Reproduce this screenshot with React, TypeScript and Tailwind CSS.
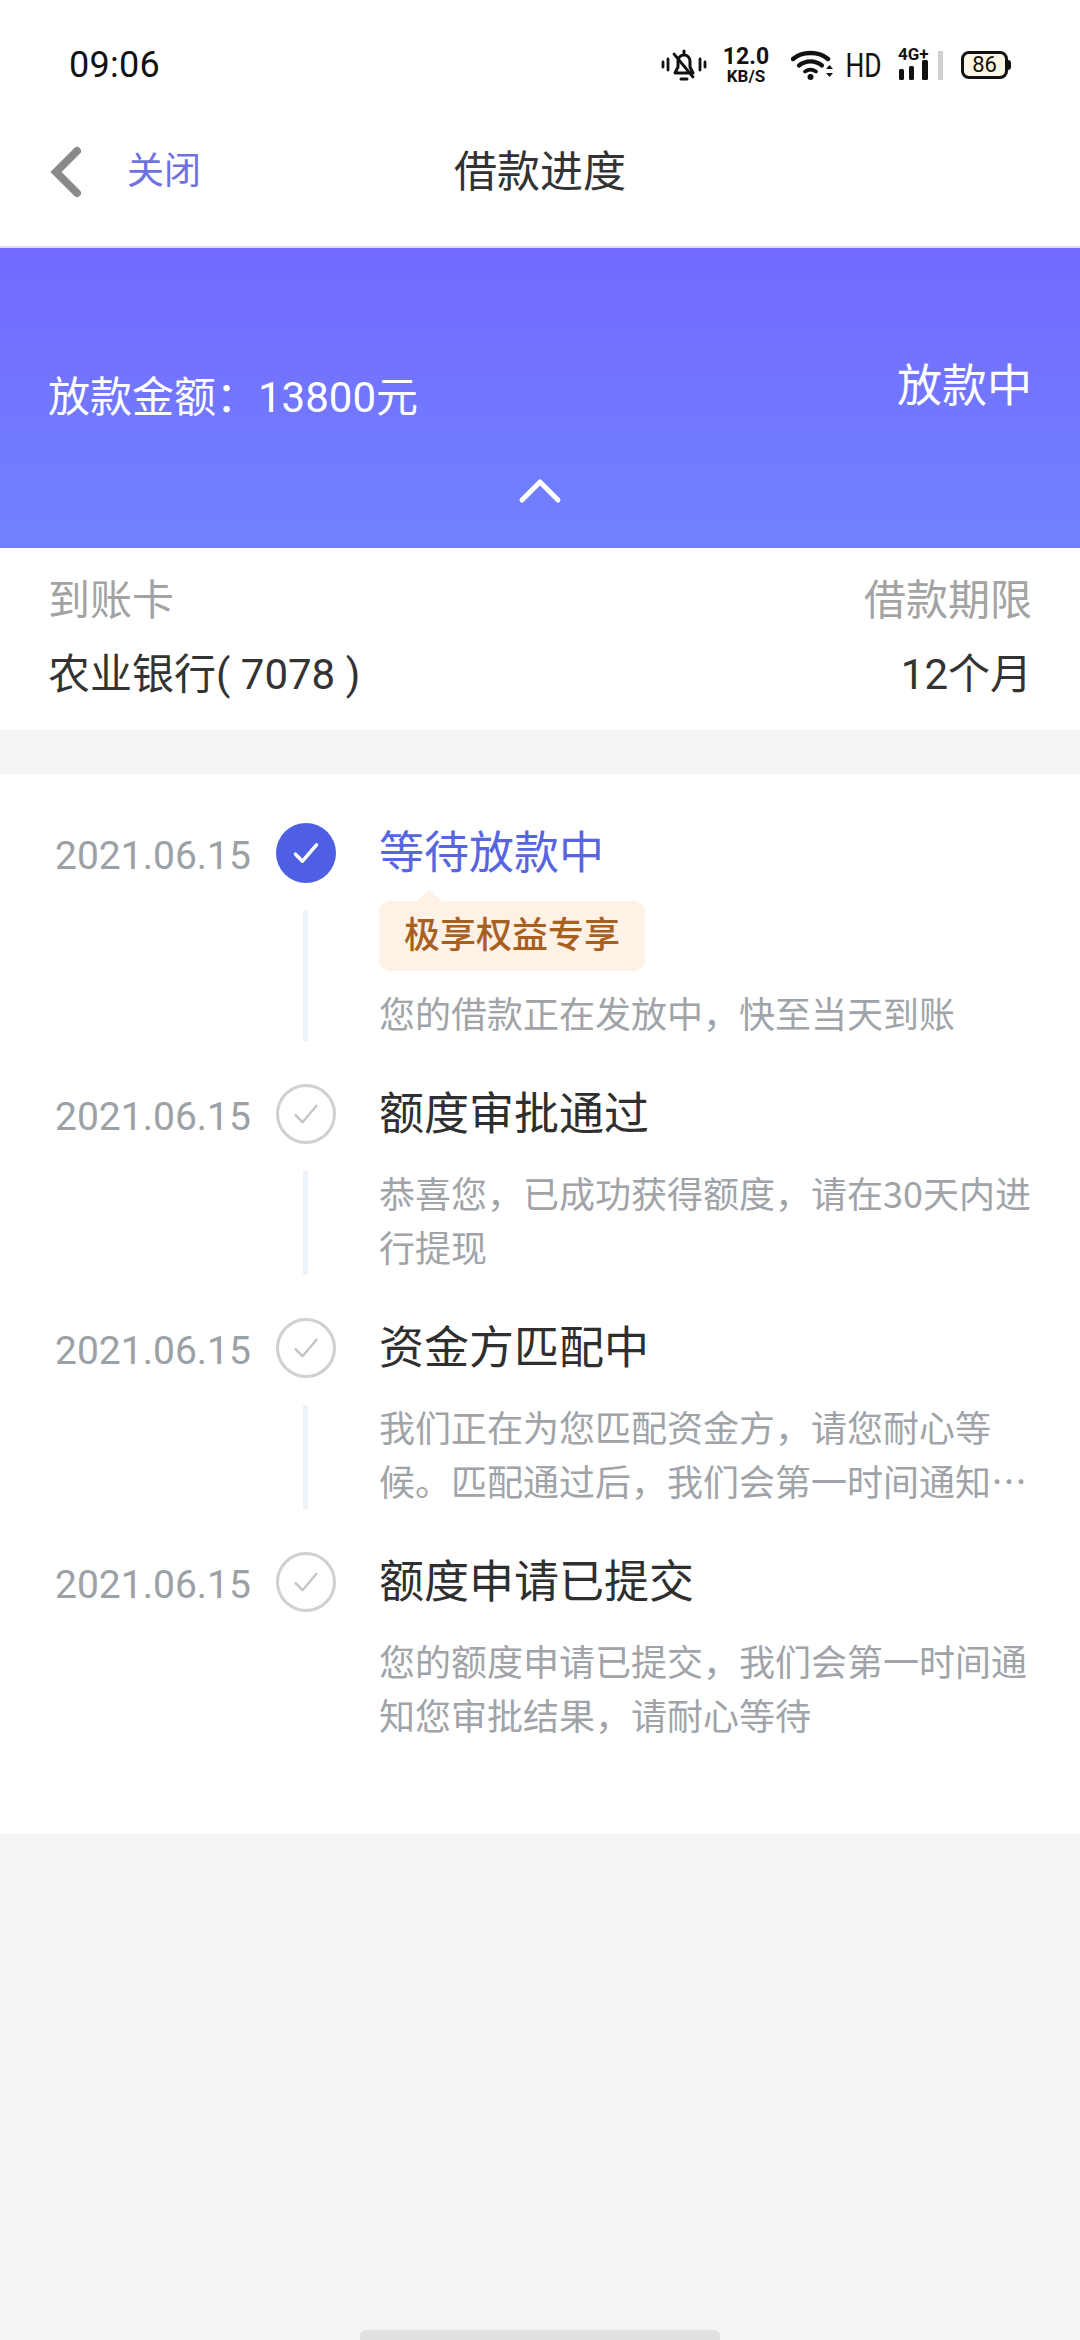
const font = { fontFamily: 'Roboto, "Noto Sans CJK SC", sans-serif' };

function MuteBell() {
  return (
    <svg width="46" height="34" viewBox="0 0 46 34" fill="none" stroke="#111" strokeLinecap="round" strokeLinejoin="round">
      <path d="M2 14v5M7 11v11M39 11v11M44 14v5" strokeWidth="2.8" />
      <path d="M23 3v2M14 25h18l-3-6v-6a6 6 0 0 0-12 0v6z" strokeWidth="3" />
      <path d="M13 6l19 23" strokeWidth="2.8" />
      <path d="M20 31h6" strokeWidth="3" />
    </svg>
  );
}

function Wifi() {
  return (
    <svg width="42" height="30" viewBox="0 0 42 30" fill="none" stroke="#111">
      <path d="M2 9c9-8 26-8 35 0" strokeWidth="4.400" strokeLinecap="round" />
      <path d="M8 15.500c7-5.500 16-5.500 23 0" strokeWidth="4.200" strokeLinecap="round" />
      <path d="M14 21.500c3.500-2.400 7.500-2.400 11 0" strokeWidth="3.800" strokeLinecap="round" />
      <circle cx="19.500" cy="27" r="3" fill="#111" stroke="none" />
      <path d="M35 19l3.500-4 3.500 4zM35 23l3.500 4 3.500-4z" fill="#111" stroke="none" />
    </svg>
  );
}

function SignalBars() {
  return (
    <svg width="46" height="30" viewBox="0 0 46 30">
      <rect x="0" y="19" width="5" height="11" rx="1.500" fill="#111" />
      <rect x="10" y="16" width="5" height="14" rx="1.500" fill="#111" />
      <rect x="23" y="10" width="6" height="20" rx="1.500" fill="#111" />
      <rect x="39" y="1" width="5" height="29" fill="#cfcfcf" />
    </svg>
  );
}

function Check({ color, size, width }: { color: string; size: number; width: number }) {
  return (
    <svg width={size} height={size} viewBox="0 0 24 24" fill="none" stroke={color} strokeWidth={width} strokeLinecap="round" strokeLinejoin="round">
      <path d="M3 13l6 6L21 5" />
    </svg>
  );
}

function Chevron() {
  return (
    <svg width="34" height="52" viewBox="0 0 34 52" fill="none">
      <path d="M29 5L8 26l21 21" stroke="#8a8a8a" strokeWidth="8" strokeLinecap="round" strokeLinejoin="miter" />
    </svg>
  );
}

function Row({
  title,
  desc,
  active,
  tag,
  last,
}: {
  title: string;
  desc: string;
  active?: boolean;
  tag?: boolean;
  last?: boolean;
}) {
  return (
    <div className={`flex ${last ? 'pb-[43px]' : ''}`}>
      <div className="w-[276px] shrink-0 h-[60px] flex items-center pl-[55px] pt-[7px] text-[39px] text-[#9ca1a6] leading-none">
        2021.06.15
      </div>
      <div className="w-[103px] shrink-0 flex flex-col">
        {active ? (
          <div className="w-[60px] h-[60px] rounded-full bg-[#4f5fe3] flex items-center justify-center">
            <Check color="#ffffff" size={28} width={3} />
          </div>
        ) : (
          <div className="w-[60px] h-[60px] rounded-full border-[3px] border-[#cfd0d2] flex items-center justify-center">
            <Check color="#c2c4c6" size={28} width={2} />
          </div>
        )}
        {!last && <div className="w-[5px] ml-[27px] flex-1 bg-[#eef3f9] mt-[27px] mb-[43px]" />}
      </div>
      <div className={`flex-1 pr-[44px] ${last ? '' : 'pb-[45px]'}`}>
        <div className={`h-[60px] leading-[60px] text-[45px] pt-[1px] ${active ? 'text-[#5766e0]' : 'text-[#2f2f2f]'}`}>{title}</div>
        {tag && (
          <div className="relative mt-[18px] w-[266px] h-[70px] rounded-[12px] bg-[#fef1e6] flex items-center justify-center text-[36px] font-medium text-[#a8601f]">
            <span className="absolute -top-[11px] left-[36px] w-0 h-0 border-x-[14px] border-x-transparent border-b-[12px] border-b-[#fef1e6]" />
            极享权益专享
          </div>
        )}
        <div className={`${tag ? 'mt-[14px]' : 'mt-[21px]'} text-[36px] leading-[54px] text-[#a0a4a8] line-clamp-2 font-['Noto_Sans_CJK_SC',sans-serif]`}>{desc}</div>
      </div>
    </div>
  );
}

export default function App() {
  return (
    <div className="w-[1080px] h-[2340px] bg-[#f4f4f4] flex flex-col overflow-hidden relative" style={font}>
      <div className="bg-white h-[248px] border-b-2 border-[#dcdcee] shrink-0 flex flex-col">
        <div className="h-[130px] flex items-center justify-between pl-[69px] pr-[69px]">
          <span className="text-[36px] text-[#111] leading-none tracking-[0.3px]">09:06</span>
          <div className="flex items-center h-[40px]">
            <MuteBell />
            <div className="ml-[15px] w-[48px] flex flex-col items-center text-[#111] font-bold">
              <span className="text-[23px] leading-[23px]">12.0</span>
              <span className="text-[17px] leading-[17px]">KB/S</span>
            </div>
            <div className="ml-[21px]"><Wifi /></div>
            <span className="ml-[8px] w-[44px] text-center text-[33px] leading-none text-[#111] scale-x-[0.8]">HD</span>
            <div className="ml-[14px] relative w-[46px] h-[30px]">
              <SignalBars />
              <span className="absolute -left-[1px] -top-[4px] text-[17px] leading-none font-bold text-[#111]">4G+</span>
            </div>
            <div className="ml-[16px] w-[50px] h-[28px] flex items-center">
              <div className="w-[47px] h-[28px] rounded-[8px] border-[3px] border-[#111] bg-[#fdf6e3] flex items-center justify-center text-[22px] leading-none text-[#111]">
                86
              </div>
              <div className="w-[3px] h-[10px] bg-[#111] rounded-r-sm" />
            </div>
          </div>
        </div>
        <div className="relative flex items-center pl-[48px] h-[84px]">
          <Chevron />
          <span className="ml-[45px] text-[37px] text-[#6e72e0]">关闭</span>
          <span className="absolute inset-x-0 text-center text-[43px] text-[#333]">借款进度</span>
        </div>
      </div>

      <div className="shrink-0 h-[300px] bg-gradient-to-b from-[#7369ff] to-[#7082ff] px-[48px] pt-[108px] text-white flex flex-col items-center">
        <div className="w-full flex justify-between items-start">
          <span className="mt-[12px] text-[42px] leading-[60px]">放款金额：13800元</span>
          <span className="text-[45px] leading-[60px] pt-[1px]">放款中</span>
        </div>
        <svg className="mt-[50px]" width="44" height="26" viewBox="0 0 44 26" fill="none">
          <path d="M4 22L22 4l18 18" stroke="#fff" strokeWidth="5" strokeLinecap="round" strokeLinejoin="round" />
        </svg>
      </div>

      <div className="shrink-0 h-[182px] bg-white px-[48px] pt-[23px]">
        <div className="flex justify-between text-[42px] leading-[60px] text-[#a3a3a3]">
          <span>到账卡</span>
          <span>借款期限</span>
        </div>
        <div className="mt-[14px] flex justify-between text-[42px] leading-[60px] text-[#333]">
          <span>农业银行( 7078 )</span>
          <span>12个月</span>
        </div>
      </div>

      <div className="mt-[44px] shrink-0 h-[1060px] bg-white pt-[49px]">
        <Row active tag title="等待放款中" desc="您的借款正在发放中，快至当天到账" />
        <Row title="额度审批通过" desc="恭喜您，已成功获得额度，请在30天内进行提现" />
        <Row title="资金方匹配中" desc="我们正在为您匹配资金方，请您耐心等候。匹配通过后，我们会第一时间通知您审批结果，请耐心等待" />
        <Row last title="额度申请已提交" desc="您的额度申请已提交，我们会第一时间通知您审批结果，请耐心等待" />
      </div>

      <div className="absolute bottom-0 left-[360px] w-[360px] h-[10px] rounded-t-[6px] bg-[#e0e0e0]" />
    </div>
  );
}
